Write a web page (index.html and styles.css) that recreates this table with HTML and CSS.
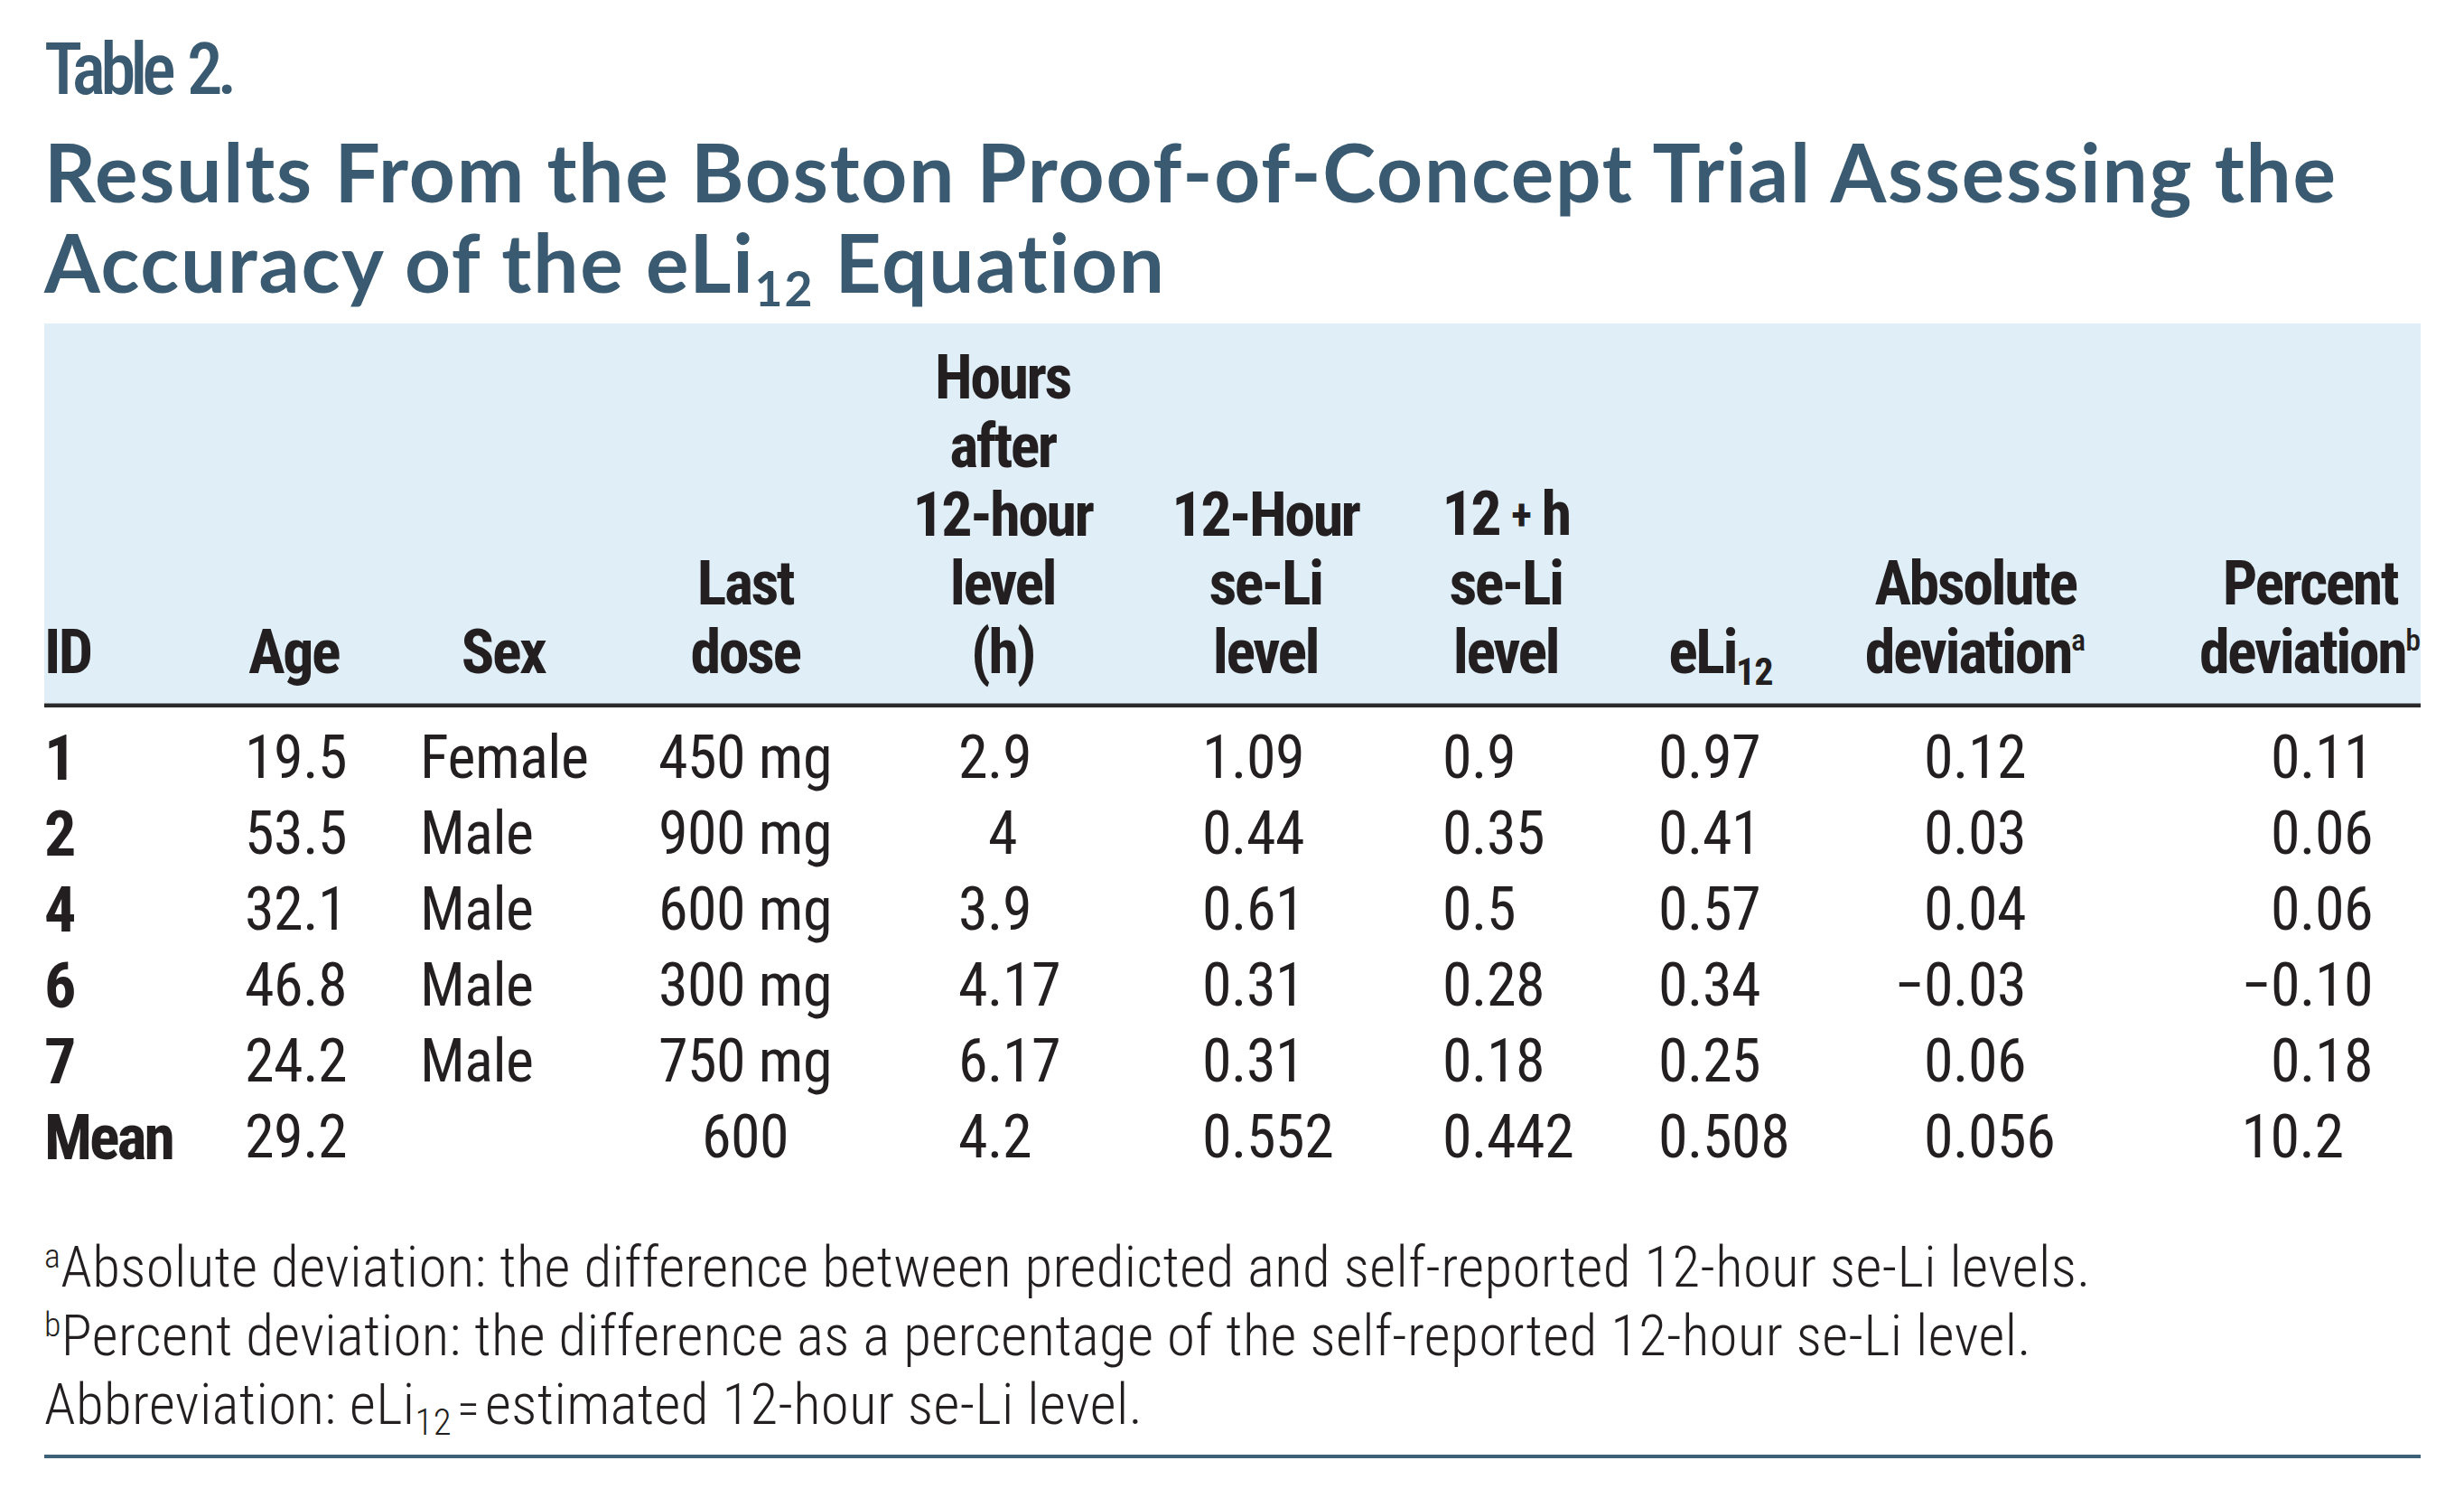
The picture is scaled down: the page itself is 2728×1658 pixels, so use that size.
FILE: index.html
```html
<!DOCTYPE html>
<html lang="en">
<head>
<meta charset="utf-8">
<title>Table 2</title>
<link rel="stylesheet" href="styles.css">
</head>
<body>
<div class="page">
  <div class="label">Table 2.</div>
  <h1 class="title">Results From the Boston Proof-of-Concept Trial Assessing the<br>Accuracy of the eLi<sub>12</sub> Equation</h1>

  <div class="thead cols">
    <div class="th left">ID</div>
    <div class="th">Age</div>
    <div class="th">Sex</div>
    <div class="th">Last<br>dose</div>
    <div class="th">Hours<br>after<br>12-hour<br>level<br>(h)</div>
    <div class="th">12-Hour<br>se-Li<br>level</div>
    <div class="th">12 <span class="plus">+</span> h<br>se-Li<br>level</div>
    <div class="th">eLi<sub>12</sub></div>
    <div class="th">Absolute<br>deviation<sup>a</sup></div>
    <div class="th right"><span class="stack">Percent<br>deviation<sup>b</sup></span></div>
  </div>

  <div class="tbody cols">
    <div class="id">1</div><div>19.5</div><div>Female</div><div>450 mg</div><div>2.9</div><div>1.09</div><div>0.9</div><div>0.97</div><div>0.12</div><div>0.11</div>
    <div class="id">2</div><div>53.5</div><div>Male</div><div>900 mg</div><div class="c">4</div><div>0.44</div><div>0.35</div><div>0.41</div><div>0.03</div><div>0.06</div>
    <div class="id">4</div><div>32.1</div><div>Male</div><div>600 mg</div><div>3.9</div><div>0.61</div><div>0.5</div><div>0.57</div><div>0.04</div><div>0.06</div>
    <div class="id">6</div><div>46.8</div><div>Male</div><div>300 mg</div><div>4.17</div><div>0.31</div><div>0.28</div><div>0.34</div><div><span class="m">−</span>0.03</div><div><span class="m">−</span>0.10</div>
    <div class="id">7</div><div>24.2</div><div>Male</div><div>750 mg</div><div>6.17</div><div>0.31</div><div>0.18</div><div>0.25</div><div>0.06</div><div>0.18</div>
    <div class="id">Mean</div><div>29.2</div><div></div><div>600</div><div>4.2</div><div>0.552</div><div>0.442</div><div>0.508</div><div>0.056</div><div><span class="hang">10.2</span></div>
  </div>

  <div class="notes">
    <p><sup>a</sup>Absolute deviation: the difference between predicted and self-reported 12-hour se-Li levels.</p>
    <p><sup>b</sup>Percent deviation: the difference as a percentage of the self-reported 12-hour se-Li level.</p>
    <p>Abbreviation: eLi<sub>12</sub><span class="eq">=</span>estimated 12-hour se-Li level.</p>
  </div>
  <div class="rule"></div>
</div>
</body>
</html>
```
FILE: styles.css
```css
html, body {
  margin: 0;
  padding: 0;
  background: #ffffff;
}

.page {
  width: 2631px;
  padding: 32px 0 0 49px;
  color: #231f20;
  font-family: "Roboto", "Liberation Sans", sans-serif;
}

.label {
  font-family: "Roboto", sans-serif;
  font-stretch: 75%;
  font-weight: 500;
  font-size: 79px;
  line-height: 90px;
  letter-spacing: -6px;
  word-spacing: 6px;
  color: #395a70;
}

.title {
  margin: 18px 0 0;
  font-family: "Lato", "Liberation Sans", sans-serif;
  font-weight: 700;
  font-size: 89px;
  line-height: 100px;
  letter-spacing: 1.8px;
  color: #395a70;
  white-space: nowrap;
}

.title sub {
  font-size: 0.6em;
  line-height: 0;
  vertical-align: -0.28em;
}

.cols {
  display: grid;
  grid-template-columns: 181px 190px 274px 262px 308px 274px 258px 218px 346px 320px;
}

.thead {
  margin-top: 18px;
  background: #dfeef7;
  padding: 22px 0 19px;
  border-bottom: 4px solid #2a2a2a;
  box-shadow: inset 0 -1px 0 #8c9297;
  align-items: end;
}

.th {
  font-stretch: 75%;
  font-weight: 700;
  font-size: 68px;
  line-height: 76px;
  letter-spacing: -2.5px;
  text-align: center;
  white-space: nowrap;
}

.th.left { text-align: left; }
.th.right { text-align: right; }

.stack {
  display: inline-block;
  text-align: center;
}

.th sub {
  font-size: 0.62em;
  line-height: 0;
  vertical-align: -0.3em;
  letter-spacing: -1px;
}

.th sup {
  font-size: 0.5em;
  line-height: 0;
  vertical-align: 0.75em;
  font-weight: 500;
  letter-spacing: 0;
}

.plus {
  font-size: 0.7em;
  vertical-align: 0.12em;
}

.tbody {
  padding-top: 14px;
  font-stretch: 75%;
  font-weight: 380;
  font-size: 66px;
  line-height: 84px;
  letter-spacing: -0.5px;
  white-space: nowrap;
}

.tbody > div:nth-child(10n+1) {
  font-weight: 700;
  font-size: 70px;
  letter-spacing: -3px;
}
.tbody > div:nth-child(10n+2) { padding-left: 41px; }
.tbody > div:nth-child(10n+3) { padding-left: 45px; }
.tbody > div:nth-child(10n+4) { text-align: center; }
.tbody > div:nth-child(10n+5) { padding-left: 105px; }
.tbody > div:nth-child(10n+5).c { padding-left: 0; text-align: center; }
.tbody > div:nth-child(10n+6) { padding-left: 67px; }
.tbody > div:nth-child(10n+7) { padding-left: 59px; }
.tbody > div:nth-child(10n+8) { padding-left: 40px; }
.tbody > div:nth-child(10n+9) { padding-left: 116px; }
.tbody > div:nth-child(10n+10) { padding-left: 154px; }

.m {
  display: inline-block;
  width: 1ch;
  margin-left: -1ch;
}

.hang {
  margin-left: -1ch;
}

.notes {
  margin-top: 64px;
  font-stretch: 87%;
  font-weight: 350;
  font-size: 63px;
  line-height: 76px;
  letter-spacing: 0.4px;
  white-space: nowrap;
}

.notes p {
  margin: 0;
}

.notes sup {
  font-size: 0.6em;
  line-height: 0;
  vertical-align: 0.55em;
}

.notes sub {
  font-size: 0.65em;
  line-height: 0;
  vertical-align: -0.3em;
}

.eq {
  display: inline-block;
  font-size: 0.8em;
  margin: 0 6px;
}

.rule {
  margin-top: 13px;
  height: 4px;
  background: #3d6178;
}
```
